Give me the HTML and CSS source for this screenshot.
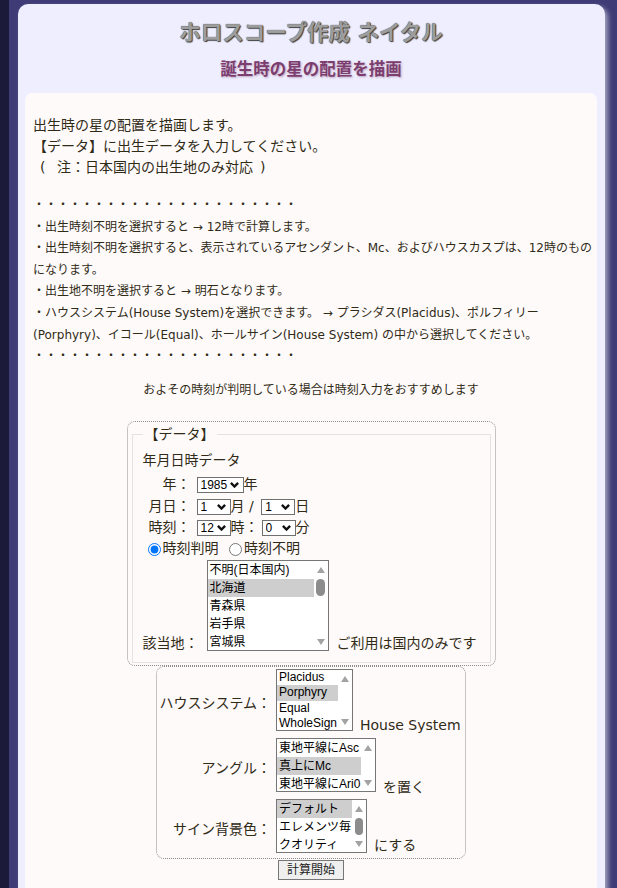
FILE: index.html
```html
<!DOCTYPE html>
<html lang="ja">
<head>
<meta charset="utf-8">
<title>ホロスコープ作成 ネイタル</title>
<link rel="stylesheet" href="styles.css">
</head>
<body>
<div class="card">
  <h1 class="title">ホロスコープ作成 ネイタル</h1>
  <h2 class="subtitle">誕生時の星の配置を描画</h2>
  <div class="panel">
    <p class="intro">出生時の星の配置を描画します。<br>【データ】に出生データを入力してください。<br>&ensp;(&ensp;&nbsp;注：日本国内の出生地のみ対応&ensp;)</p>
    <p class="notes"><span class="dots">・・・・・・・・・・・・・・・・・・・・・・</span><br>・出生時刻不明を選択すると → 12時で計算します。<br>・出生時刻不明を選択すると、表示されているアセンダント、Mc、およびハウスカスプは、12時のもの<br>になります。<br>・出生地不明を選択すると → 明石となります。<br>・ハウスシステム(House System)を選択できます。 → プラシダス(Placidus)、ポルフィリー<br>(Porphyry)、イコール(Equal)、ホールサイン(House System) の中から選択してください。<br><span class="dots">・・・・・・・・・・・・・・・・・・・・・・</span></p>
    <p class="recommend">およその時刻が判明している場合は時刻入力をおすすめします</p>

    <div class="databox">
      <fieldset class="datafs">
        <legend>【データ】</legend>
        <div class="fs-title">年月日時データ</div>
        <div class="frow"><span class="lab">年：</span><span class="dd"><select class="w47">
          <option>1980</option><option>1981</option><option>1982</option><option>1983</option><option>1984</option><option selected>1985</option><option>1986</option><option>1987</option><option>1988</option><option>1989</option><option>1990</option>
        </select><svg class="chev" viewBox="0 0 9 6"><path d="M0.9 0.9l3.6 3.6L8.1 0.9" /></svg></span>年</div>
        <div class="frow"><span class="lab">月日：</span><span class="dd"><select class="w34">
          <option selected>1</option><option>2</option><option>3</option><option>4</option><option>5</option><option>6</option><option>7</option><option>8</option><option>9</option><option>10</option><option>11</option><option>12</option>
        </select><svg class="chev" viewBox="0 0 9 6"><path d="M0.9 0.9l3.6 3.6L8.1 0.9" /></svg></span>月 / <span class="dd ml3"><select class="w34">
          <option selected>1</option><option>2</option><option>3</option><option>4</option><option>5</option><option>6</option><option>7</option><option>8</option><option>9</option><option>10</option><option>11</option><option>12</option><option>13</option><option>14</option><option>15</option><option>16</option><option>17</option><option>18</option><option>19</option><option>20</option><option>21</option><option>22</option><option>23</option><option>24</option><option>25</option><option>26</option><option>27</option><option>28</option><option>29</option><option>30</option><option>31</option>
        </select><svg class="chev" viewBox="0 0 9 6"><path d="M0.9 0.9l3.6 3.6L8.1 0.9" /></svg></span>日</div>
        <div class="frow"><span class="lab">時刻：</span><span class="dd"><select class="w34">
          <option>0</option><option>1</option><option>2</option><option>3</option><option>4</option><option>5</option><option>6</option><option>7</option><option>8</option><option>9</option><option>10</option><option>11</option><option selected>12</option><option>13</option><option>14</option><option>15</option><option>16</option><option>17</option><option>18</option><option>19</option><option>20</option><option>21</option><option>22</option><option>23</option>
        </select><svg class="chev" viewBox="0 0 9 6"><path d="M0.9 0.9l3.6 3.6L8.1 0.9" /></svg></span>時：<span class="dd ml3"><select class="w34">
          <option selected>0</option><option>5</option><option>10</option><option>15</option><option>20</option><option>25</option><option>30</option><option>35</option><option>40</option><option>45</option><option>50</option><option>55</option>
        </select><svg class="chev" viewBox="0 0 9 6"><path d="M0.9 0.9l3.6 3.6L8.1 0.9" /></svg></span>分</div>
        <div class="frow radios"><input type="radio" name="tm" id="tm1" checked><label for="tm1">時刻判明</label> <input type="radio" name="tm" id="tm2" class="r2"><label for="tm2">時刻不明</label></div>
        <div class="prefrow">
          <span class="side">該当地：</span>
          <div class="lb lb-pref" role="listbox" aria-label="該当地">
            <div class="lb-opts">
              <div class="opt" role="option">不明(日本国内)</div>
              <div class="opt sel" role="option" aria-selected="true">北海道</div>
              <div class="opt" role="option">青森県</div>
              <div class="opt" role="option">岩手県</div>
              <div class="opt" role="option">宮城県</div>
              <div class="opt" role="option">秋田県</div>
              <div class="opt" role="option">山形県</div>
              <div class="opt" role="option">福島県</div>
              <div class="opt" role="option">茨城県</div>
              <div class="opt" role="option">栃木県</div>
              <div class="opt" role="option">群馬県</div>
              <div class="opt" role="option">埼玉県</div>
              <div class="opt" role="option">千葉県</div>
              <div class="opt" role="option">東京都</div>
              <div class="opt" role="option">神奈川県</div>
              <div class="opt" role="option">新潟県</div>
              <div class="opt" role="option">富山県</div>
              <div class="opt" role="option">石川県</div>
              <div class="opt" role="option">福井県</div>
              <div class="opt" role="option">山梨県</div>
              <div class="opt" role="option">長野県</div>
              <div class="opt" role="option">岐阜県</div>
              <div class="opt" role="option">静岡県</div>
              <div class="opt" role="option">愛知県</div>
              <div class="opt" role="option">三重県</div>
              <div class="opt" role="option">滋賀県</div>
              <div class="opt" role="option">京都府</div>
              <div class="opt" role="option">大阪府</div>
              <div class="opt" role="option">兵庫県</div>
              <div class="opt" role="option">奈良県</div>
              <div class="opt" role="option">和歌山県</div>
              <div class="opt" role="option">鳥取県</div>
              <div class="opt" role="option">島根県</div>
              <div class="opt" role="option">岡山県</div>
              <div class="opt" role="option">広島県</div>
              <div class="opt" role="option">山口県</div>
              <div class="opt" role="option">徳島県</div>
              <div class="opt" role="option">香川県</div>
              <div class="opt" role="option">愛媛県</div>
              <div class="opt" role="option">高知県</div>
              <div class="opt" role="option">福岡県</div>
              <div class="opt" role="option">佐賀県</div>
              <div class="opt" role="option">長崎県</div>
              <div class="opt" role="option">熊本県</div>
              <div class="opt" role="option">大分県</div>
              <div class="opt" role="option">宮崎県</div>
              <div class="opt" role="option">鹿児島県</div>
              <div class="opt" role="option">沖縄県</div>
            </div>
            <div class="sb"><span class="up"></span><span class="thumb"></span><span class="gap"></span><span class="down"></span></div>
          </div>
          <span class="side">ご利用は国内のみです</span>
        </div>
      </fieldset>
    </div>

    <div class="optbox">
      <div class="glab">ハウスシステム：</div>
      <div class="gcell">
        <div class="lb lb-house" role="listbox" aria-label="ハウスシステム">
          <div class="lb-opts">
            <div class="opt" role="option">Placidus</div>
            <div class="opt sel" role="option" aria-selected="true">Porphyry</div>
            <div class="opt" role="option">Equal</div>
            <div class="opt" role="option">WholeSign</div>
          </div>
          <div class="sb"><span class="up"></span><span class="gap"></span><span class="down"></span></div>
        </div>
        <span class="after a-house">House System</span>
      </div>

      <div class="glab">アングル：</div>
      <div class="gcell">
        <div class="lb lb-angle" role="listbox" aria-label="アングル">
          <div class="lb-opts">
            <div class="opt" role="option">東地平線にAsc</div>
            <div class="opt sel" role="option" aria-selected="true">真上にMc</div>
            <div class="opt" role="option">東地平線にAri0</div>
          </div>
          <div class="sb"><span class="up"></span><span class="gap"></span><span class="down"></span></div>
        </div>
        <span class="after a-angle">を置く</span>
      </div>

      <div class="glab">サイン背景色：</div>
      <div class="gcell">
        <div class="lb lb-sign" role="listbox" aria-label="サイン背景色">
          <div class="lb-opts">
            <div class="opt sel" role="option" aria-selected="true">デフォルト</div>
            <div class="opt" role="option">エレメンツ毎</div>
            <div class="opt" role="option">クオリティ</div>
            <div class="opt" role="option">サイン毎</div>
          </div>
          <div class="sb"><span class="up"></span><span class="thumb thin"></span><span class="gap"></span><span class="down"></span></div>
        </div>
        <span class="after a-sign">にする</span>
      </div>
    </div>
    <button class="go" type="button">計算開始</button>
  </div>
</div>
</body>
</html>
```

FILE: styles.css
```css
* { box-sizing: border-box; }

html {
  background: linear-gradient(to right, #1b1a38 0, #1b1a38 9px, #3e3b76 9px);
  min-height: 100%;
}

body {
  margin: 0;
  padding: 4px 12px 0 18px;
  font-family: "DejaVu Sans", "Noto Sans CJK JP", sans-serif;
  color: #2f2b16;
}

.card {
  background: #eeeeff;
  border-radius: 10px 10px 0 0;
  box-shadow: 3px 3px 5px rgba(175, 175, 200, 0.9);
  padding: 15px 8px 30px 7px;
}

.title {
  margin: 0;
  font-size: 21.5px;
  line-height: 28px;
  font-weight: bold;
  text-align: center;
  color: #9d9d9d;
  text-shadow: 0 0 1px #222, 1px 1px 1px #444;
}

.subtitle {
  margin: 12px 0 0;
  font-size: 16.5px;
  line-height: 22px;
  font-weight: bold;
  text-align: center;
  color: #7b3e6e;
  text-shadow: 1px 1px 2px rgba(140, 80, 120, 0.45);
}

.panel {
  margin-top: 12px;
  background: #fffafa;
  border-radius: 7px;
  padding: 22px 8px 30px;
}

.intro {
  margin: 0;
  font-size: 14px;
  line-height: 21px;
}

.notes {
  margin: 17px 0 0;
  font-size: 12px;
  line-height: 21.6px;
  white-space: nowrap;
}

.recommend {
  margin: 12px 0 0;
  font-size: 12px;
  line-height: 21.6px;
  text-align: center;
}

/* ---------- data box ---------- */
.databox {
  width: 369px;
  margin: 20px auto 0;
  border: 1px dotted #8c8c8c;
  border-radius: 8px;
  padding: 2px 4px;
}

.datafs {
  margin: 0;
  min-width: 0;
  border: 1px solid #e3e3e3;
  padding: 6px 10px 11px;
}

.datafs legend {
  font-size: 14px;
  line-height: 20px;
  padding: 0 2px;
}

.fs-title {
  font-size: 14px;
  line-height: 21px;
  margin-bottom: 3px;
}

.frow {
  font-size: 14px;
  line-height: 21.33px;
  height: 21.33px;
  white-space: nowrap;
}

.lab {
  display: inline-block;
  width: 48px;
  text-align: right;
  margin-right: 6px;
}

.dd {
  position: relative;
  display: inline-flex;
  vertical-align: middle;
}

.dd.ml3 { margin-left: 3px; }

.dd select {
  -webkit-appearance: none;
  appearance: none;
  height: 16px;
  margin: 0;
  padding: 0 0 0 3px;
  border: 1px solid #707070;
  border-radius: 0;
  background: #fff;
  color: #000;
  font: 12px/14px "Liberation Sans", Arial, sans-serif;
}

.dd select.w47 { width: 47px; }
.dd select.w34 { width: 34px; }

.chev {
  position: absolute;
  right: 5px;
  top: 5px;
  width: 9px;
  height: 6px;
  pointer-events: none;
}

.chev path {
  fill: none;
  stroke: #111;
  stroke-width: 2.4;
}

.radios input {
  width: 13px;
  height: 13px;
  margin: 0 2px 0 5px;
  vertical-align: middle;
}

.radios input.r2 { margin-left: 6px; }

.prefrow {
  display: flex;
  align-items: flex-end;
  font-size: 14px;
  line-height: 17px;
  white-space: nowrap;
}

.prefrow .side { margin-bottom: -1px; }
.prefrow .lb { margin: 0 8px; }

/* ---------- list boxes ---------- */
.lb {
  display: flex;
  flex: none;
  border: 1px solid #767676;
  background: #fff;
}

.lb-opts {
  flex: 1;
  min-width: 0;
  overflow: hidden;
}

.opt {
  padding-left: 2px;
  font: 12px "Liberation Sans", "Noto Sans CJK JP", sans-serif;
  color: #000;
  white-space: nowrap;
}

.opt.sel { background: #cecece; }

.lb-pref { width: 122px; height: 91px; }
.lb-house { width: 77px; height: 62px; }
.lb-angle { width: 100px; height: 54px; }
.lb-sign { width: 91px; height: 54px; }

.lb-pref .opt,
.lb-angle .opt,
.lb-sign .opt { height: 18px; line-height: 18px; }
.lb-house .opt { height: 15.5px; line-height: 15.5px; }

.sb {
  flex: none;
  width: 14px;
  display: flex;
  flex-direction: column;
  align-items: center;
}

.sb .up,
.sb .down {
  display: flex;
  align-items: center;
  justify-content: center;
  width: 100%;
}

.sb .up { height: 18px; }
.sb .down { height: 15px; }

.sb .up::before {
  content: "";
  border-left: 4.5px solid transparent;
  border-right: 4.5px solid transparent;
  border-bottom: 6px solid #a3a3a3;
}

.sb .down::before {
  content: "";
  border-left: 4.5px solid transparent;
  border-right: 4.5px solid transparent;
  border-top: 6px solid #a3a3a3;
}

.sb .thumb {
  width: 9px;
  height: 17px;
  border-radius: 5px;
  background: #8c8c8c;
}

.sb .thumb.thin { width: 8px; }

.sb .gap { flex: 1; }

/* ---------- options box ---------- */
.optbox {
  width: 310px;
  margin: 0 auto;
  border: 1px dotted #8c8c8c;
  border-radius: 8px;
  padding: 2px 0 5px;
  display: grid;
  grid-template-columns: 114px auto;
  column-gap: 5px;
  row-gap: 7px;
  align-items: center;
  font-size: 14px;
}

.glab {
  text-align: right;
  line-height: 17px;
  padding-top: 8px;
  white-space: nowrap;
}

.gcell {
  display: flex;
  align-items: flex-end;
  line-height: 17px;
  white-space: nowrap;
}

.gcell .after { margin-left: 7px; }
.gcell .a-house { margin-bottom: -3px; }
.gcell .a-angle { margin-bottom: -4px; }
.gcell .a-sign { margin-bottom: -1px; }

.go {
  display: block;
  margin: 1px auto 0;
  width: 66px;
  height: 20px;
  padding: 0;
  font: 12px/18px "DejaVu Sans", "Noto Sans CJK JP", sans-serif;
  color: #222;
  background: #efefef;
  border: 1px solid #767676;
  border-radius: 0;
}
```
